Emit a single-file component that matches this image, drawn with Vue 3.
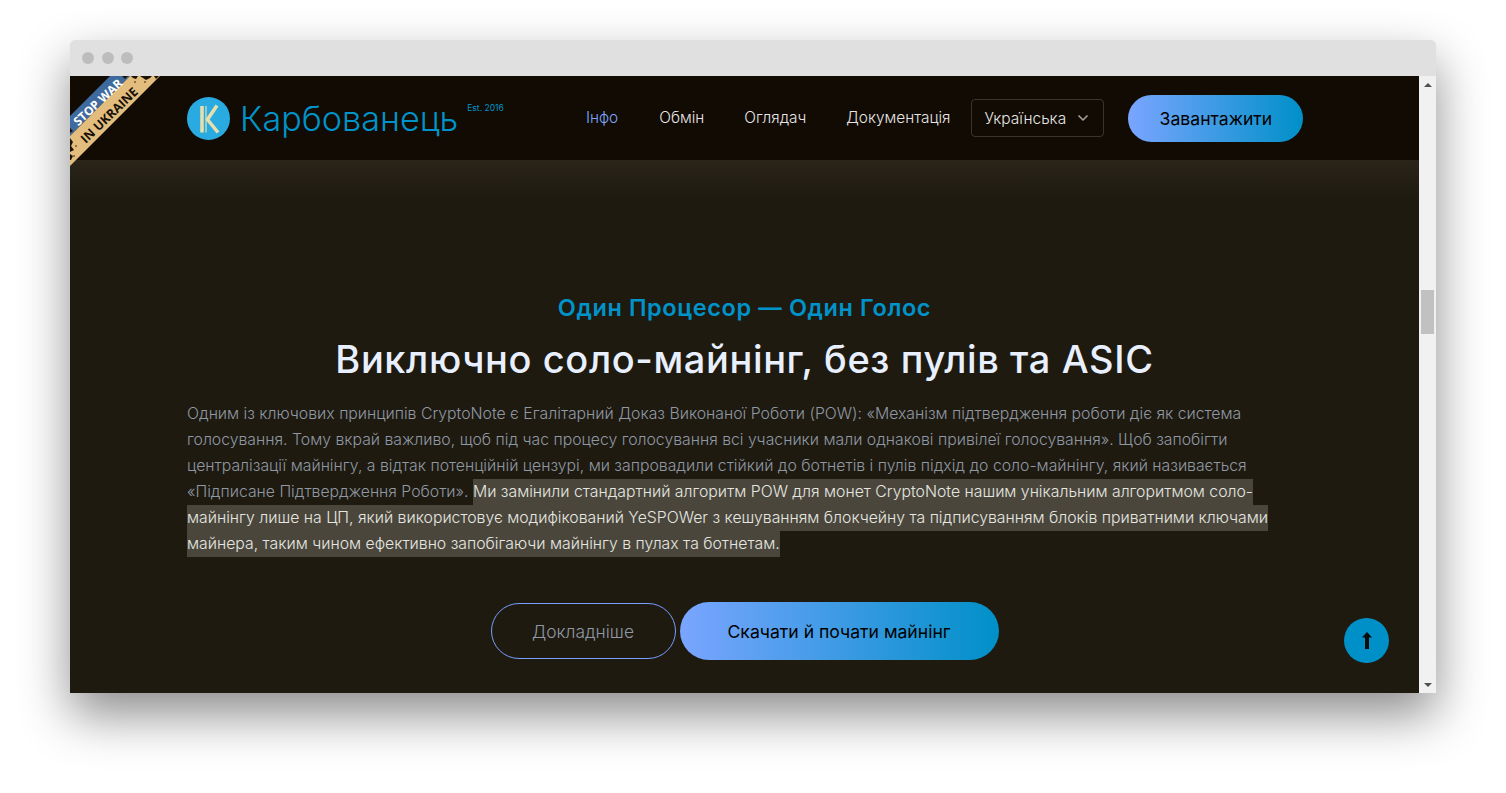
<template>
  <div class="shot">
    <div class="window">
      <div class="titlebar">
        <span class="dot"></span>
        <span class="dot"></span>
        <span class="dot"></span>
      </div>
      <div class="viewport">
        <div class="page">
          <svg class="ribbon" width="90" height="90" viewBox="0 0 90 90">
            <polygon points="0,40 40,0 60,0 0,60" fill="#3f6a9e" />
            <polygon points="0,60 60,0 90,0 0,90" fill="#e3bd7e" />
            <g fill="#1b1206">
              <polygon points="61,0 68,0 66,3 63,2" />
              <polygon points="70,0 82,0 80,2 76,4 73,2" />
              <polygon points="84,0 89,0 86,3" />
              <polygon points="52,0 58,0 55,3" />
              <polygon points="0,62 3,66 1,70 4,74 0,76" />
              <polygon points="0,78 3,80 1,84 0,84" />
              <polygon points="0,52 3,55 0,57" />
              <circle cx="65" cy="6" r="0.800" />
              <circle cx="75" cy="6" r="0.800" />
              <circle cx="6" cy="70" r="0.800" />
              <circle cx="4" cy="80" r="0.800" />
            </g>
            <text class="rib-a" transform="translate(28 26.500) rotate(-43)" text-anchor="middle" y="4">STOP WAR</text>
            <text class="rib-b" transform="translate(39.500 39.500) rotate(-44)" text-anchor="middle" y="4">IN UKRAINE</text>
          </svg>

          <header class="header">
            <div class="brand">
              <svg class="logo" width="43" height="43" viewBox="0 0 43 43">
                <circle cx="21.500" cy="21.500" r="21.500" fill="#29abe2" />
                <g fill="none" stroke="#e8dfae" stroke-linecap="butt">
                  <path d="M15 9v26.500" stroke-width="3.500" />
                  <path d="M19 9v26.500" stroke-width="1.200" />
                  <path d="M30 8.500l-9.500 14 10.500 13" stroke-width="3.500" />
                </g>
              </svg>
              <span class="brand-name">Карбованець</span>
              <span class="est">Est. 2016</span>
            </div>
            <nav class="nav">
              <a class="active">Інфо</a>
              <a>Обмін</a>
              <a>Оглядач</a>
              <a>Документація</a>
            </nav>
            <div class="lang">
              <span>Українська</span>
              <svg width="12" height="8" viewBox="0 0 12 8">
                <path d="M1.500 1.500L6 6l4.500-4.500" fill="none" stroke="#a9a69e" stroke-width="1.500" />
              </svg>
            </div>
            <a class="btn-grad btn-get">Завантажити</a>
          </header>

          <section class="hero">
            <h3 class="sub">Один Процесор — Один Голос</h3>
            <h2 class="title">Виключно соло-майнінг, без пулів та ASIC</h2>
            <p class="text">
              Одним із ключових принципів CryptoNote є Егалітарний Доказ Виконаної Роботи (POW): «Механізм підтвердження роботи діє як система<br />
              голосування. Тому вкрай важливо, щоб під час процесу голосування всі учасники мали однакові привілеї голосування». Щоб запобігти<br />
              централізації майнінгу, а відтак потенційній цензурі, ми запровадили стійкий до ботнетів і пулів підхід до соло-майнінгу, який називається<br />
              «Підписане Підтвердження Роботи». <mark>Ми замінили стандартний алгоритм POW для монет CryptoNote нашим унікальним алгоритмом соло-<br />
              майнінгу лише на ЦП, який використовує модифікований YeSPOWer з кешуванням блокчейну та підписуванням блоків приватними ключами<br />
              майнера, таким чином ефективно запобігаючи майнінгу в пулах та ботнетам.</mark>
            </p>
            <div class="actions">
              <a class="btn-line">Докладніше</a>
              <a class="btn-grad btn-main">Скачати й почати майнінг</a>
            </div>
          </section>

          <a class="to-top">
            <svg width="12" height="18" viewBox="0 0 12 18">
              <path d="M6 0L11 5.500H8V17H4V5.500H1z" fill="#0b0b0b" />
            </svg>
          </a>
        </div>

        <div class="scrollbar">
          <span class="arrow up"></span>
          <div class="track"><span class="thumb"></span></div>
          <span class="arrow down"></span>
        </div>
      </div>
    </div>
  </div>
</template>

<script setup>
</script>

<style>
html, body {
  margin: 0;
  background: #fff;
  overflow: hidden;
}
</style>

<style scoped>
.shot {
  width: 1506px;
  height: 793px;
  padding: 40px 70px 100px;
  box-sizing: border-box;
  font-family: Inter, "Noto Sans", sans-serif;
}

.window {
  height: 653px;
  display: flex;
  flex-direction: column;
  border-radius: 5px 5px 0 0;
  box-shadow: 0 22px 50px rgba(0, 0, 0, 0.45);
}

.titlebar {
  height: 36px;
  flex: none;
  display: flex;
  align-items: center;
  gap: 7.500px;
  padding: 0 0 0 12px;
  background: #e0e0e0;
  border-radius: 5px 5px 0 0;
}

.dot {
  width: 12px;
  height: 12px;
  border-radius: 50%;
  background: #bdbdbd;
}

.viewport {
  flex: 1;
  display: flex;
  min-height: 0;
}

.page {
  flex: 1;
  position: relative;
  overflow: hidden;
  background: #1e1a10;
}

.ribbon {
  position: absolute;
  top: 0;
  left: 0;
}

.rib-a,
.rib-b {
  font-family: "Open Sans", sans-serif;
  font-weight: 700;
}

.rib-a {
  font-size: 12px;
  fill: #fff;
}

.rib-b {
  font-size: 12.500px;
  fill: #16100a;
}

.header {
  height: 84px;
  display: flex;
  align-items: center;
  padding-left: 117px;
  background: #120b03;
}

.brand {
  width: 399px;
  display: flex;
  align-items: center;
  color: #0093c9;
}

.logo {
  flex: none;
}

.brand-name {
  margin-left: 10px;
  font-size: 34.200px;
  font-weight: 300;
  line-height: 43px;
}

.est {
  margin: -21px 0 0 9px;
  font-size: 8.500px;
  font-weight: 400;
}

.nav {
  display: flex;
  gap: 40px;
  margin-top: -2px;
  font-size: 15.400px;
  font-weight: 300;
  color: #e6e6e6;
}

.nav .active {
  margin-right: 1px;
  color: #7fa5ff;
}

.lang {
  width: 133px;
  height: 38px;
  box-sizing: border-box;
  margin-left: 21px;
  padding: 0 14px 0 12px;
  display: flex;
  align-items: center;
  justify-content: space-between;
  border: 1px solid #3a352b;
  border-radius: 4px;
  font-size: 15.500px;
  font-weight: 300;
  color: #e6e6e6;
}

.btn-grad {
  display: flex;
  align-items: center;
  justify-content: center;
  background: linear-gradient(90deg, #7aa5ff 0%, #0090c8 100%);
  color: #000;
  font-weight: 400;
}

.btn-get {
  width: 175px;
  height: 47px;
  margin-left: 24px;
  border-radius: 24px;
  font-size: 17.600px;
}

.hero {
  height: 533px;
  box-sizing: border-box;
  padding: 131px 117px 0;
  background: linear-gradient(180deg, #2a2419 0, #1e1a10 40px);
  text-align: center;
}

.sub {
  margin: 0;
  font-size: 23.500px;
  font-weight: 600;
  letter-spacing: 0.6px;
  line-height: 34px;
  color: #0093c9;
}

.title {
  margin: 10px 0 0;
  font-size: 38px;
  font-weight: 500;
  letter-spacing: 0.6px;
  line-height: 48px;
  color: #e8f0ff;
}

.text {
  margin: 18px 0 0;
  font-size: 15.800px;
  font-weight: 300;
  line-height: 26px;
  color: #8f98a3;
  text-align: left;
  white-space: nowrap;
}

mark {
  padding: 3px 0 4px;
  background: #4a463c;
  color: #e6e6e0;
}

.actions {
  margin-top: 45px;
  display: flex;
  justify-content: center;
  align-items: center;
  gap: 4px;
}

.btn-line {
  width: 185px;
  height: 56px;
  box-sizing: border-box;
  display: flex;
  align-items: center;
  justify-content: center;
  border: 1px solid #7a9eff;
  border-radius: 28px;
  font-size: 17.400px;
  font-weight: 300;
  color: #8f98a3;
}

.btn-main {
  width: 319px;
  height: 58px;
  border-radius: 29px;
  font-size: 17.600px;
}

.to-top {
  position: absolute;
  right: 30px;
  bottom: 30px;
  width: 45px;
  height: 45px;
  display: flex;
  align-items: center;
  justify-content: center;
  border-radius: 50%;
  background: #0090c8;
}

.scrollbar {
  width: 17px;
  flex: none;
  display: flex;
  flex-direction: column;
  background: #f1f1f1;
}

.arrow {
  height: 17px;
  flex: none;
  display: flex;
  align-items: center;
  justify-content: center;
}

.arrow::before {
  content: "";
  border-left: 4px solid transparent;
  border-right: 4px solid transparent;
}

.arrow.up::before {
  border-bottom: 4px solid #505050;
}

.arrow.down::before {
  border-top: 4px solid #505050;
}

.track {
  flex: 1;
  padding: 197px 2px 0;
}

.thumb {
  display: block;
  height: 44px;
  background: #c1c1c1;
}
</style>
